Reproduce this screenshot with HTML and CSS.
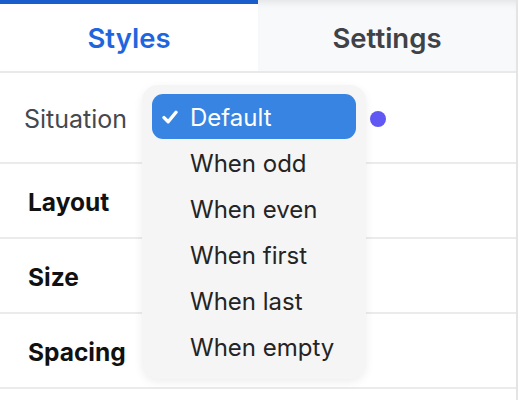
FILE: index.html
```html
<!DOCTYPE html>
<html>
<head>
<meta charset="utf-8">
<link rel="stylesheet" href="styles.css">
</head>
<body>
<div class="panel">
  <div class="tabs">
    <div class="tab tab-active">Styles</div>
    <div class="tab tab-inactive">Settings</div>
  </div>
  <div class="row row-situation">
    <div class="label label-light">Situation</div>
    <div class="select-slot"></div>
    <div class="dot"></div>
    <div class="menu">
      <div class="item item-selected">
        <span class="check"><svg width="16" height="16" viewBox="0 0 16 16"><path d="M2 8.6 L6.2 12.8 L14 3.2" fill="none" stroke="#fff" stroke-width="3.4" stroke-linecap="round" stroke-linejoin="round"/></svg></span>
        <span>Default</span>
      </div>
      <div class="item"><span class="check"></span><span>When odd</span></div>
      <div class="item"><span class="check"></span><span>When even</span></div>
      <div class="item"><span class="check"></span><span>When first</span></div>
      <div class="item"><span class="check"></span><span>When last</span></div>
      <div class="item"><span class="check"></span><span>When empty</span></div>
    </div>
  </div>
  <div class="row"><div class="label label-bold">Layout</div></div>
  <div class="row"><div class="label label-bold">Size</div></div>
  <div class="row"><div class="label label-bold">Spacing</div></div>
</div>
</body>
</html>
```
FILE: styles.css
```css
html, body {
  margin: 0;
  padding: 0;
  background: #ffffff;
}
body {
  font-family: Inter, "Liberation Sans", sans-serif;
}
.panel {
  width: 516px;
  height: 400px;
  border-right: 2px solid #e4e4e4;
  overflow: hidden;
}
.tabs {
  display: flex;
  height: 71px;
  border-bottom: 2px solid #e9e9e9;
}
.tab {
  flex: 1;
  display: flex;
  align-items: center;
  justify-content: center;
  font-size: 27.5px;
  font-weight: 600;
  box-sizing: border-box;
}
.tab-active {
  color: #1f66de;
  background: #ffffff;
  border-top: 4px solid #1b5ccc;
}
.tab-inactive {
  color: #3f4246;
  background: #f8f9fb;
  box-shadow: inset 0 8px 8px -6px rgba(0,0,0,0.10);
  padding-top: 4px;
}
.row {
  display: flex;
  align-items: center;
  height: 73px;
  border-bottom: 2px solid #ebebeb;
  padding-left: 28px;
}
.row-situation {
  position: relative;
  height: 89px;
  padding-left: 0;
}
.label-light {
  font-size: 25px;
  color: #45484d;
  width: 117px;
  padding-left: 24px;
  padding-top: 3px;
}
.label-bold {
  font-size: 24.5px;
  font-weight: 700;
  color: #111111;
  padding-top: 3px;
}
.select-slot {
  width: 229px;
}
.dot {
  width: 16px;
  height: 16px;
  border-radius: 50%;
  background: #6158f4;
  margin-top: 3px;
}
.menu {
  position: absolute;
  left: 142px;
  top: 12px;
  width: 224px;
  box-sizing: border-box;
  padding: 9px 10px;
  background: #f5f5f5;
  border-radius: 16px;
  box-shadow: 0 3px 10px rgba(0,0,0,0.07);
  z-index: 2;
}
.item {
  display: flex;
  align-items: center;
  height: 46px;
  font-size: 24px;
  color: #242424;
  border-radius: 11px;
  padding-top: 1px;
  box-sizing: border-box;
}
.item-selected {
  background: #3784e2;
  color: #ffffff;
  height: 45px;
  margin-bottom: 1px;
}
.check {
  width: 38px;
  display: flex;
  justify-content: flex-start;
  padding-left: 10px;
  box-sizing: border-box;
}
```
